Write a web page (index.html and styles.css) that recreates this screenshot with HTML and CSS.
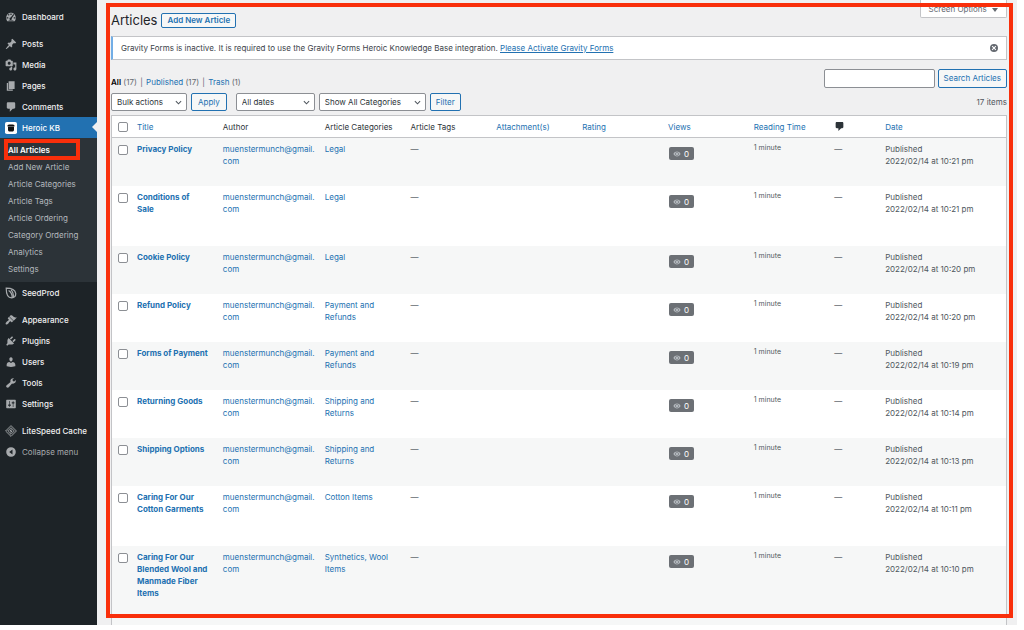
FILE: index.html
```
<!DOCTYPE html>
<html lang="en">
<head>
    <meta charset="UTF-8">
    <meta name="viewport" content="width=device-width, initial-scale=1.0">
    <title>Articles</title>
    <link rel="stylesheet" href="styles.css">
</head>
<body>

    <!-- Icon shapes -->
    <svg class="symbols" width="0" height="0">
        <symbol id="dashboard" viewBox="0 0 20 20"><path fill-rule="evenodd" d="M3.8 17h12.4c1.1-1.5 1.8-3.4 1.8-5.4C18 6.8 14.4 3 10 3s-8 3.8-8 8.6c0 2 .7 3.900 1.800 5.400zM9 4h2v2.500H9zM4.700 6.200l1.400-1.400 1.600 1.600-1.400 1.400zM15.300 6.200l-1.200-1.200-4.600 6a2 2 0 1 0 1.800 1.200zM3 10.500h2.500v2H3zM14.500 10.500H17v2h-2.500zM6 15h8v1H6z"/></symbol>
        <symbol id="post" viewBox="0 0 20 20"><path d="M10.440 3.020l1.820-1.820 6.360 6.350-1.830 1.820c-1.050-.68-2.480-.57-3.410.36l-.75.75c-.92.93-1.040 2.350-.35 3.410l-1.830 1.820-2.410-2.410-2.800 2.790c-.42.42-3.380 2.710-3.800 2.290s1.860-3.390 2.280-3.810l2.790-2.790L4.100 9.360l1.830-1.820c1.050.69 2.480.57 3.400-.36l.75-.75c.93-.92 1.050-2.350.36-3.410z"/></symbol>
        <symbol id="media" viewBox="0 0 20 20"><path d="M13 11V4c0-.55-.45-1-1-1h-1.670L9 1H5L3.670 3H2c-.55 0-1 .45-1 1v7c0 .55.45 1 1 1h10c.55 0 1-.45 1-1zM7 4.500c1.380 0 2.500 1.120 2.500 2.500S8.380 9.500 7 9.500 4.500 8.380 4.500 7 5.620 4.500 7 4.500zM14 6h5v10.500c0 1.380-1.120 2.500-2.500 2.500S14 17.880 14 16.500s1.120-2.500 2.500-2.500c.17 0 .34.02.5.05V9h-3V6zm-4 8.050V13h2v3.500c0 1.380-1.120 2.500-2.500 2.500S7 17.880 7 16.500 8.120 14 9.500 14c.17 0 .34.02.5.05z"/></symbol>
        <symbol id="page" viewBox="0 0 20 20"><path d="M6 15V2h10v13H6zm-1 1h8v2H3V5h2v11z"/></symbol>
        <symbol id="comment" viewBox="0 0 20 20"><path d="M5 2h10c1.100 0 2 .9 2 2v7c0 1.100-.9 2-2 2h-2l-5 5v-5H5c-1.100 0-2-.9-2-2V4c0-1.100.9-2 2-2z"/></symbol>
        <symbol id="heroic" viewBox="0 0 20 20"><rect width="20" height="20" rx="3" fill="#fff"/><path fill="#111" d="M4 6.500C4 4.500 6 4 10 4s6 .5 6 2.500L15 8v5c0 2-1 3-3 3H8c-2 0-3-1-3-3V8z"/><path fill="#999" d="M5 7h10v1H5z"/></symbol>
        <symbol id="seedprod" viewBox="0 0 20 20"><path fill="none" stroke="currentColor" stroke-width="2" d="M2 2c9 0 15 3 16 9 0 4-2 7-7 7-6 0-9-6-9-16zM6 6c5 3 6 7 6 12M10 5c4 3 4 6 4 12"/></symbol>
        <symbol id="appearance" viewBox="0 0 20 20"><path d="M14.480 11.060L7.410 3.990l1.500-1.500c.5-.56 2.300-.47 3.510.32 1.210.8 1.430 1.280 2.910 2.100 1.180.64 2.450 1.260 4.450.85zm-.71.71L6.700 4.700 4.930 6.470c-.39.39-.39 1.020 0 1.410l1.060 1.060c.39.39.39 1.030 0 1.420-.6.6-1.430 1.110-2.210 1.690-.35.26-.7.53-1.010.84C1.430 14.230.4 16.080 1.400 17.070c.99 1 2.840-.03 4.180-1.360.31-.31.58-.66.85-1.020.57-.78 1.080-1.610 1.690-2.210.39-.39 1.020-.39 1.410 0l1.060 1.060c.39.39 1.020.39 1.410 0z"/></symbol>
        <symbol id="plugins" viewBox="0 0 20 20"><path d="M13.110 4.360L9.870 7.600 8 5.730l3.240-3.240c.35-.34 1.050-.2 1.560.32.52.51.66 1.210.31 1.550zm-8 1.770l.91-1.120 9.010 9.010-1.190.84c-.71.71-2.630 1.160-3.820 1.160H6.140L4.900 17.260c-.59.59-1.540.59-2.120 0-.59-.58-.59-1.530 0-2.120l1.240-1.240v-3.880c0-1.130.4-3.190 1.090-3.890zm7.260 3.970l3.240-3.240c.34-.35 1.040-.21 1.550.31.52.51.66 1.210.31 1.550l-3.240 3.250z"/></symbol>
        <symbol id="users" viewBox="0 0 20 20"><path d="M10 9.250c-2.270 0-2.730-3.440-2.730-3.440C7 4.020 7.820 2 9.970 2c2.160 0 2.980 2.020 2.710 3.810 0 0-.41 3.440-2.680 3.440zm0 2.570L12.720 10c2.390 0 4.520 2.330 4.520 4.530v2.490s-3.650 1.130-7.240 1.130c-3.650 0-7.240-1.130-7.240-1.130v-2.490c0-2.250 1.940-4.480 4.470-4.480z"/></symbol>
        <symbol id="tools" viewBox="0 0 20 20"><path d="M16.680 9.770c-1.340 1.340-3.300 1.670-4.950.99l-5.410 6.520c-.99.99-2.590.99-3.580 0s-.99-2.590 0-3.570l6.520-5.420c-.68-1.650-.35-3.610.99-4.950 1.280-1.280 3.120-1.620 4.720-1.060l-2.890 2.890 2.820 2.820 2.860-2.870c.53 1.580.18 3.390-1.080 4.650z"/></symbol>
        <symbol id="settings" viewBox="0 0 20 20"><path d="M18 16V4c0-.55-.45-1-1-1H3c-.55 0-1 .45-1 1v12c0 .55.45 1 1 1h14c.55 0 1-.45 1-1zM8 11h1c.55 0 1 .45 1 1s-.45 1-1 1H8v1.500c0 .28-.22.5-.5.5s-.5-.22-.5-.5V13H6c-.55 0-1-.45-1-1s.45-1 1-1h1V5.500c0-.28.22-.5.5-.5s.5.22.5.5V11zm5-2h-1c-.55 0-1-.45-1-1s.45-1 1-1h1V5.500c0-.28.22-.5.5-.5s.5.22.5.5V7h1c.55 0 1 .45 1 1s-.45 1-1 1h-1v5.500c0 .28-.22.5-.5.5s-.5-.22-.5-.5V9z"/></symbol>
        <symbol id="litespeed" viewBox="0 0 20 20"><path fill="none" stroke="currentColor" stroke-width="1.500" d="M10 1l9 9-9 9-9-9zM10 4.500l5.500 5.500-5.500 5.500L4.500 10z"/><path d="M11 6l-4 4.500h2.500L9 14l4-4.500h-2.500z"/></symbol>
        <symbol id="collapse" viewBox="0 0 20 20"><path fill-rule="evenodd" d="M10 2a8 8 0 1 0 0 16 8 8 0 0 0 0-16zM12.500 6v8L7 10z"/></symbol>
        <symbol id="dismiss" viewBox="0 0 20 20"><path fill-rule="evenodd" d="M10 2a8 8 0 1 0 0 16 8 8 0 0 0 0-16zM7 5.500l3 3 3-3L14.500 7l-3 3 3 3-1.500 1.500-3-3-3 3L5.500 13l3-3-3-3z"/></symbol>
        <symbol id="eye" viewBox="0 0 20 20"><path fill-rule="evenodd" d="M1 10c2-4 5.500-6 9-6s7 2 9 6c-2 4-5.500 6-9 6s-7-2-9-6zM10 5.500a4.500 4.500 0 1 0 0 9 4.500 4.500 0 0 0 0-9z"/><circle cx="10" cy="10" r="3"/></symbol>
    </svg>

    <div class="app">
        <nav class="sidebar">
            <a class="item" href="#"><svg><use href="#dashboard"/></svg>Dashboard</a>
            <a class="item group" href="#"><svg><use href="#post"/></svg>Posts</a>
            <a class="item" href="#"><svg><use href="#media"/></svg>Media</a>
            <a class="item" href="#"><svg><use href="#page"/></svg>Pages</a>
            <a class="item" href="#"><svg><use href="#comment"/></svg>Comments</a>
            <a class="item current" href="#"><svg><use href="#heroic"/></svg>Heroic KB</a>
            <div class="submenu">
                <a class="active" href="#">All Articles</a>
                <a href="#">Add New Article</a>
                <a href="#">Article Categories</a>
                <a href="#">Article Tags</a>
                <a href="#">Article Ordering</a>
                <a href="#">Category Ordering</a>
                <a href="#">Analytics</a>
                <a href="#">Settings</a>
            </div>
            <a class="item" href="#"><svg><use href="#seedprod"/></svg>SeedProd</a>
            <a class="item group" href="#"><svg><use href="#appearance"/></svg>Appearance</a>
            <a class="item" href="#"><svg><use href="#plugins"/></svg>Plugins</a>
            <a class="item" href="#"><svg><use href="#users"/></svg>Users</a>
            <a class="item" href="#"><svg><use href="#tools"/></svg>Tools</a>
            <a class="item" href="#"><svg><use href="#settings"/></svg>Settings</a>
            <a class="item group" href="#"><svg><use href="#litespeed"/></svg>LiteSpeed Cache</a>
            <button class="item collapse" type="button"><svg><use href="#collapse"/></svg>Collapse menu</button>
        </nav>

        <main class="content">
            <div class="heading">
                <h1>Articles</h1>
                <a class="button add-new" href="#">Add New Article</a>
                <button class="screen-options" type="button">Screen Options <span class="caret"></span></button>
            </div>

            <div class="notice">
                <p>Gravity Forms is inactive. It is required to use the Gravity Forms Heroic Knowledge Base integration. <a href="#">Please Activate Gravity Forms</a></p>
                <button class="dismiss" type="button" aria-label="Dismiss"><svg><use href="#dismiss"/></svg></button>
            </div>

            <div class="toolbar">
                <div class="views">
                    <a class="all" href="#">All</a> (17) <span class="bar">|</span> <a href="#">Published</a> (17) <span class="bar">|</span> <a href="#">Trash</a> (1)
                </div>
                <form class="search">
                    <input type="search" aria-label="Search Articles">
                    <button class="button" type="button">Search Articles</button>
                </form>
            </div>

            <div class="filters">
                <select class="bulk" aria-label="Bulk actions"><option>Bulk actions</option></select>
                <button class="button apply" type="button">Apply</button>
                <select class="dates" aria-label="Date"><option>All dates</option></select>
                <select class="categories" aria-label="Category"><option>Show All Categories</option></select>
                <button class="button" type="button">Filter</button>
                <span class="count">17 items</span>
            </div>

            <table class="articles">
                <colgroup>
                    <col class="col-check"><col class="col"><col class="col-author"><col class="col"><col class="col"><col class="col">
                    <col class="col"><col class="col"><col class="col-reading"><col class="col-comments"><col class="col-date">
                </colgroup>
                <thead>
                    <tr>
                        <th class="check"><input type="checkbox" aria-label="Select all"></th>
                        <th><a href="#">Title</a></th>
                        <th>Author</th>
                        <th>Article Categories</th>
                        <th>Article Tags</th>
                        <th><a href="#">Attachment(s)</a></th>
                        <th><a href="#">Rating</a></th>
                        <th><a href="#">Views</a></th>
                        <th><a href="#">Reading Time</a></th>
                        <th><svg class="bubble" role="img" aria-label="Comments"><use href="#comment"/></svg></th>
                        <th><a href="#">Date</a></th>
                    </tr>
                </thead>
                <tbody>
                    <tr>
                        <td class="check"><input type="checkbox" aria-label="Select Privacy Policy"></td>
                        <td class="title"><a href="#">Privacy Policy</a></td>
                        <td><a href="#">muenstermunch@gmail.<wbr>com</a></td>
                        <td><a href="#">Legal</a></td>
                        <td>—</td>
                        <td></td>
                        <td></td>
                        <td><span class="hits"><svg><use href="#eye"/></svg>0</span></td>
                        <td class="reading">1 minute</td>
                        <td>—</td>
                        <td>Published<br>2022/02/14 at 10:21 pm</td>
                    </tr>
                    <tr>
                        <td class="check"><input type="checkbox" aria-label="Select Conditions of Sale"></td>
                        <td class="title"><a href="#">Conditions of<br>Sale</a></td>
                        <td><a href="#">muenstermunch@gmail.<wbr>com</a></td>
                        <td><a href="#">Legal</a></td>
                        <td>—</td>
                        <td></td>
                        <td></td>
                        <td><span class="hits"><svg><use href="#eye"/></svg>0</span></td>
                        <td class="reading">1 minute</td>
                        <td>—</td>
                        <td>Published<br>2022/02/14 at 10:21 pm</td>
                    </tr>
                    <tr>
                        <td class="check"><input type="checkbox" aria-label="Select Cookie Policy"></td>
                        <td class="title"><a href="#">Cookie Policy</a></td>
                        <td><a href="#">muenstermunch@gmail.<wbr>com</a></td>
                        <td><a href="#">Legal</a></td>
                        <td>—</td>
                        <td></td>
                        <td></td>
                        <td><span class="hits"><svg><use href="#eye"/></svg>0</span></td>
                        <td class="reading">1 minute</td>
                        <td>—</td>
                        <td>Published<br>2022/02/14 at 10:20 pm</td>
                    </tr>
                    <tr>
                        <td class="check"><input type="checkbox" aria-label="Select Refund Policy"></td>
                        <td class="title"><a href="#">Refund Policy</a></td>
                        <td><a href="#">muenstermunch@gmail.<wbr>com</a></td>
                        <td><a href="#">Payment and Refunds</a></td>
                        <td>—</td>
                        <td></td>
                        <td></td>
                        <td><span class="hits"><svg><use href="#eye"/></svg>0</span></td>
                        <td class="reading">1 minute</td>
                        <td>—</td>
                        <td>Published<br>2022/02/14 at 10:20 pm</td>
                    </tr>
                    <tr>
                        <td class="check"><input type="checkbox" aria-label="Select Forms of Payment"></td>
                        <td class="title"><a href="#">Forms of Payment</a></td>
                        <td><a href="#">muenstermunch@gmail.<wbr>com</a></td>
                        <td><a href="#">Payment and Refunds</a></td>
                        <td>—</td>
                        <td></td>
                        <td></td>
                        <td><span class="hits"><svg><use href="#eye"/></svg>0</span></td>
                        <td class="reading">1 minute</td>
                        <td>—</td>
                        <td>Published<br>2022/02/14 at 10:19 pm</td>
                    </tr>
                    <tr>
                        <td class="check"><input type="checkbox" aria-label="Select Returning Goods"></td>
                        <td class="title"><a href="#">Returning Goods</a></td>
                        <td><a href="#">muenstermunch@gmail.<wbr>com</a></td>
                        <td><a href="#">Shipping and Returns</a></td>
                        <td>—</td>
                        <td></td>
                        <td></td>
                        <td><span class="hits"><svg><use href="#eye"/></svg>0</span></td>
                        <td class="reading">1 minute</td>
                        <td>—</td>
                        <td>Published<br>2022/02/14 at 10:14 pm</td>
                    </tr>
                    <tr>
                        <td class="check"><input type="checkbox" aria-label="Select Shipping Options"></td>
                        <td class="title"><a href="#">Shipping Options</a></td>
                        <td><a href="#">muenstermunch@gmail.<wbr>com</a></td>
                        <td><a href="#">Shipping and Returns</a></td>
                        <td>—</td>
                        <td></td>
                        <td></td>
                        <td><span class="hits"><svg><use href="#eye"/></svg>0</span></td>
                        <td class="reading">1 minute</td>
                        <td>—</td>
                        <td>Published<br>2022/02/14 at 10:13 pm</td>
                    </tr>
                    <tr>
                        <td class="check"><input type="checkbox" aria-label="Select Caring For Our Cotton Garments"></td>
                        <td class="title"><a href="#">Caring For Our Cotton Garments</a></td>
                        <td><a href="#">muenstermunch@gmail.<wbr>com</a></td>
                        <td><a href="#">Cotton Items</a></td>
                        <td>—</td>
                        <td></td>
                        <td></td>
                        <td><span class="hits"><svg><use href="#eye"/></svg>0</span></td>
                        <td class="reading">1 minute</td>
                        <td>—</td>
                        <td>Published<br>2022/02/14 at 10:11 pm</td>
                    </tr>
                    <tr>
                        <td class="check"><input type="checkbox" aria-label="Select Caring For Our Blended Wool and Manmade Fiber Items"></td>
                        <td class="title"><a href="#">Caring For Our Blended Wool and Manmade Fiber Items</a></td>
                        <td><a href="#">muenstermunch@gmail.<wbr>com</a></td>
                        <td><a href="#">Synthetics, Wool Items</a></td>
                        <td>—</td>
                        <td></td>
                        <td></td>
                        <td><span class="hits"><svg><use href="#eye"/></svg>0</span></td>
                        <td class="reading">1 minute</td>
                        <td>—</td>
                        <td>Published<br>2022/02/14 at 10:10 pm</td>
                    </tr>
                </tbody>
            </table>
        </main>

        <!-- Red callouts -->
        <div class="callout callout-menu"></div>
        <div class="callout callout-content"></div>
    </div>

</body>
</html>
```

FILE: styles.css
```
* { box-sizing: border-box; }
body {
    margin: 0;
    background: #fff;
    color: #50575e;
    font-family: Inter, "Liberation Sans", sans-serif;
    font-size: 8px;
    line-height: 12px;
}
a { color: #2271b1; text-decoration: none; }
svg { fill: currentColor; }
button, input, select { font: inherit; margin: 0; }
.symbols { position: absolute; }

.app {
    position: relative;
    display: flex;
    height: calc(100vh - 5px);
    margin-right: 7px;
    overflow: hidden;
    background: #f0f0f1;
}

/* Sidebar */
.sidebar {
    flex: none;
    width: 97px;
    padding-top: 6px;
    background: #1d2327;
}
.item {
    display: flex;
    align-items: center;
    gap: 5px;
    height: 21px;
    padding-left: 5px;
    color: #f0f0f1;
    font-weight: 500;
    white-space: nowrap;
}
.item svg { flex: none; width: 12px; height: 12px; color: #a7aaad; }
.group { margin-top: 6px; }
.current {
    position: relative;
    background: #2271b1;
    color: #fff;
}
.current::after {
    content: "";
    position: absolute;
    right: 0;
    top: 5px;
    border: 5px solid transparent;
    border-left-width: 0;
    border-right-color: #f0f0f1;
}
.collapse {
    width: 100%;
    padding-right: 0;
    border: none;
    background: none;
    color: #a7aaad;
    font-weight: 400;
}
.submenu { padding: 4px 0; background: #2c3338; }
.submenu a {
    display: block;
    padding-left: 8px;
    color: #b4b9be;
    line-height: 17px;
}
.submenu .active { color: #fff; font-weight: 600; }

/* Content */
.content { flex: 1; min-width: 0; padding: 0 10px 0 14px; }
.heading { display: flex; align-items: center; height: 36px; padding-top: 4px; }
h1 { margin: 0 4px 0 0; color: #1d2327; font-size: 13px; font-weight: 400; line-height: 16px; }
.button {
    height: 19px;
    padding: 0 5px;
    border: 1px solid #2271b1;
    border-radius: 2px;
    background: #f6f7f7;
    color: #2271b1;
    line-height: 17px;
    white-space: nowrap;
}
.add-new { height: 15px; font-weight: 600; line-height: 13px; }
.screen-options {
    align-self: flex-start;
    height: 18px;
    margin: -4px 0 0 auto;
    padding: 0 8px;
    border: 1px solid #c3c4c7;
    border-top: none;
    border-radius: 0 0 2px 2px;
    background: #fff;
    color: #646970;
}
.caret {
    display: inline-block;
    margin-left: 3px;
    border: 3px solid transparent;
    border-top: 4px solid #646970;
    border-bottom: none;
}
.notice {
    display: flex;
    align-items: center;
    justify-content: space-between;
    height: 24px;
    padding: 0 7px 0 8px;
    border: 1px solid #c3c4c7;
    border-left: 2px solid #72aee6;
    background: #fff;
    color: #3c434a;
}
.notice p { margin: 0; }
.notice a { text-decoration: underline; }
.dismiss { display: flex; padding: 0; border: none; background: none; color: #646970; }
.dismiss svg { width: 10px; height: 10px; }

.toolbar {
    display: flex;
    align-items: flex-end;
    justify-content: space-between;
    padding-top: 9px;
}
.views { color: #646970; }
.views .all { color: #000; font-weight: 600; }
.bar { padding: 0 1px; }
.search { display: flex; gap: 3px; }
.search input {
    width: 111px;
    height: 19px;
    border: 1px solid #8c8f94;
    border-radius: 2px;
    background: #fff;
}

.filters { display: flex; align-items: center; gap: 4px; padding: 5px 0 4px; }
select {
    appearance: none;
    height: 18px;
    padding: 0 14px 0 5px;
    border: 1px solid #8c8f94;
    border-radius: 2px;
    background: #fff url("data:image/svg+xml,%3Csvg xmlns='http://www.w3.org/2000/svg' viewBox='0 0 8 8'%3E%3Cpath d='M1 2.500l3 3 3-3' fill='none' stroke='%2350575e' stroke-width='1.200'/%3E%3C/svg%3E") no-repeat right 4px center / 7px 7px;
    color: #2c3338;
}
.filters .button { height: 18px; line-height: 16px; }
.bulk { width: 76px; }
.filters .apply { margin-right: 5px; padding: 0 6px; }
.dates { width: 79px; }
.categories { width: 107px; }
.count { margin-left: auto; }

/* Articles table */
.articles {
    width: 100%;
    table-layout: fixed;
    border: 1px solid #c3c4c7;
    border-spacing: 0;
    background: #fff;
}
.col-check { width: 20px; }
.col { width: 9.600%; }
.col-author { width: 11.400%; }
.col-reading { width: 9%; }
.col-comments { width: 5.700%; }
th {
    height: 22px;
    padding: 0 5px;
    border-bottom: 1px solid #c3c4c7;
    color: #2c3338;
    font-weight: 400;
    text-align: left;
    white-space: nowrap;
}
td { padding: 5px 5px 7px; vertical-align: top; }
tbody tr:nth-child(odd) { background: #f6f7f7; }
.title { padding-bottom: 31px; font-weight: 700; }
.check { padding-left: 6px; padding-right: 0; }
.check input {
    appearance: none;
    display: block;
    width: 10px;
    height: 10px;
    border: 1px solid #8c8f94;
    border-radius: 2px;
    background: #fff;
}
td.check { padding-top: 7px; }
.bubble { display: block; width: 11px; height: 11px; }
.hits {
    display: inline-flex;
    align-items: center;
    gap: 3px;
    height: 13px;
    margin: 4px 0 0 1px;
    padding: 0 5px 0 4px;
    border-radius: 2px;
    background: #6c7075;
    color: #fff;
}
.hits svg { width: 8px; height: 8px; color: #b4b9be; }
.reading { padding-top: 4px; font-size: 7px; }

/* Callouts lie over the page */
.callout { position: absolute; border: 4px solid #f92f0b; }
.callout-menu { left: 4px; top: 139px; width: 76px; height: 21px; }
.callout-content { left: 106px; right: 4px; top: 3px; bottom: 7px; }
```
